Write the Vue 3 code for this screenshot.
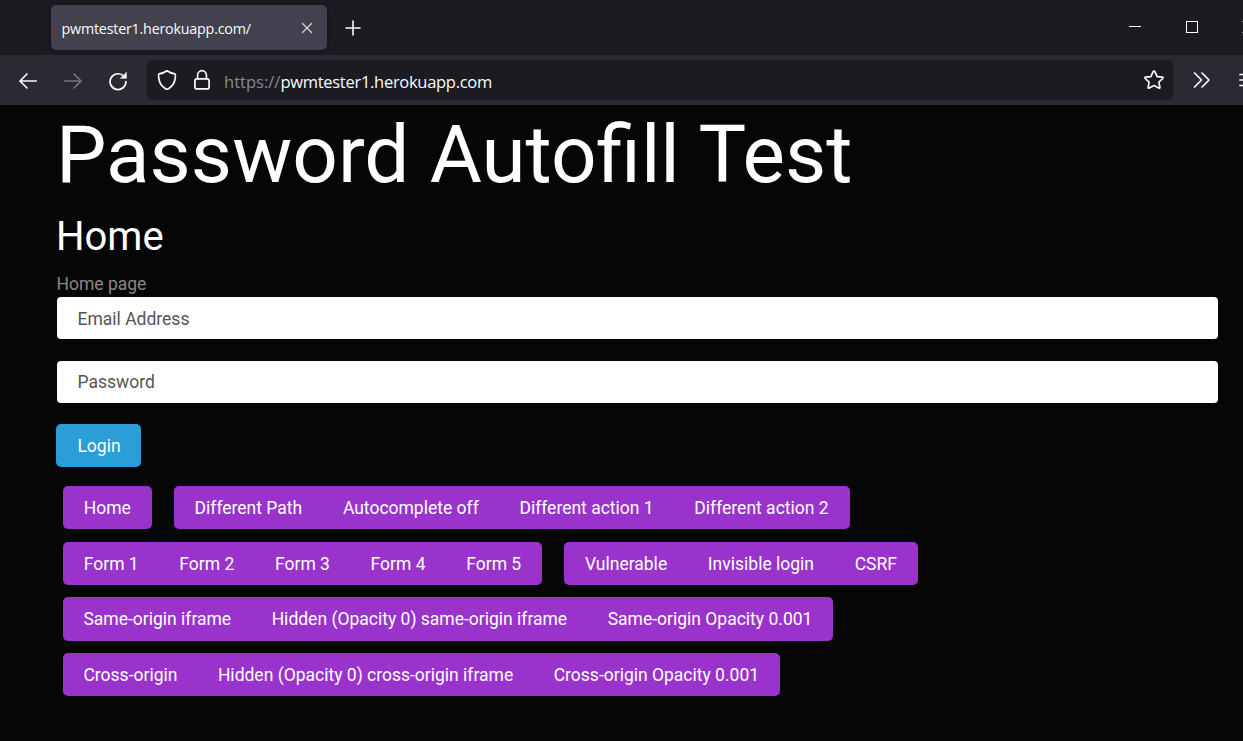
<script setup>
const rows = [
  [['Home'], ['Different Path', 'Autocomplete off', 'Different action 1', 'Different action 2']],
  [['Form 1', 'Form 2', 'Form 3', 'Form 4', 'Form 5'], ['Vulnerable', 'Invisible login', 'CSRF']],
  [['Same-origin iframe', 'Hidden (Opacity 0) same-origin iframe', 'Same-origin Opacity 0.001']],
  [['Cross-origin', 'Hidden (Opacity 0) cross-origin iframe', 'Cross-origin Opacity 0.001']],
]
</script>

<template>
  <div class="window">
    <header class="tabs">
      <div class="tab">
        <span class="tab-title">pwmtester1.herokuapp.com/</span>
        <svg class="close" width="12" height="12" viewBox="0 0 12 12"><path d="M1.5 1.5l9 9M10.5 1.5l-9 9" /></svg>
      </div>
      <svg class="plus" width="16" height="16" viewBox="0 0 16 16"><path d="M8 1v14M1 8h14" /></svg>
      <div class="controls">
        <svg width="12" height="12" viewBox="0 0 12 12" shape-rendering="crispEdges"><path d="M0 5.5h12" /></svg>
        <svg width="12" height="12" viewBox="0 0 12 12"><rect x=".5" y=".5" width="11" height="11" /></svg>
        <svg class="window-close" width="12" height="12" viewBox="0 0 12 12"><path d="M.5 .5l11 11M11.5 .5l-11 11" /></svg>
      </div>
    </header>
    <nav class="toolbar">
      <svg class="back" width="20" height="18" viewBox="0 0 20 18"><path d="M18.2 9H2M9 2L2 9l7 7" /></svg>
      <svg class="forward" width="20" height="18" viewBox="0 0 20 18"><path d="M1.8 9H18M11 2l7 7-7 7" /></svg>
      <svg class="reload" width="20" height="20" viewBox="0 0 20 20"><path d="M17.9 10.5A7.9 7.9 0 1 1 14.8 4.4" /><path class="solid" d="M18.4 1.6v5.700h-5.700z" /></svg>
      <div class="address">
        <svg class="shield" width="20" height="22" viewBox="0 0 20 22"><path d="M10 1.800C7.600 3.600 5 4.400 2.100 4.900 1.300 5.100 1.600 7.500 1.800 9.200c.5 4.800 3.300 8.600 7 10.700q1.200.6 2.400 0c3.700-2.100 6.500-5.900 7-10.700.2-1.700.5-4.100-.3-4.300C15 4.400 12.400 3.600 10 1.800z" /></svg>
        <svg class="lock" width="18" height="22" viewBox="0 0 18 22"><rect x="1.900" y="9.900" width="14.200" height="10" rx="2" /><path d="M4.600 9.800V6.100a4.400 4.400 0 0 1 8.800 0v3.700" /></svg>
        <span class="url"><span class="scheme">https://</span>pwmtester1.herokuapp.com</span>
        <svg class="star" width="22" height="22" viewBox="0 0 22 22"><path d="M11 2.200q.7 0 1 .7l2.100 4.700 5.200.6q1.300.3.500 1.300l-3.900 3.600 1 5.200q.1 1.200-1 .8L11 16.500l-4.900 2.600q-1.100.4-1-.8l1-5.200-3.900-3.600q-.8-1 .5-1.300l5.200-.6L10 2.900q.3-.7 1-.7z" /></svg>
      </div>
      <svg class="more" width="18" height="18" viewBox="0 0 18 18"><path d="M1.500 2l7 7-7 7M9 2l7 7-7 7" /></svg>
      <svg class="menu" width="18" height="14" viewBox="0 0 18 14"><path d="M1 1.500h16M1 7h16M1 12.500h16" /></svg>
    </nav>
    <main class="page">
      <h1>Password Autofill Test</h1>
      <h3>Home</h3>
      <p>Home page</p>
      <form @submit.prevent>
        <input class="email" type="text" placeholder="Email Address" />
        <input type="password" placeholder="Password" />
        <button class="login" type="submit">Login</button>
      </form>
      <div class="rows">
        <div v-for="(row, r) in rows" :key="r" class="row">
          <div v-for="(group, g) in row" :key="g" class="group">
            <a v-for="item in group" :key="item">{{ item }}</a>
          </div>
        </div>
      </div>
    </main>
  </div>
</template>

<style>
body { margin: 0; overflow: hidden; background: #060606; }
</style>

<style scoped>
* { box-sizing: border-box; }
.window { width: 1243px; height: 741px; overflow: hidden; display: flex; flex-direction: column; background: #060606; font-family: Roboto, sans-serif; color: #fff; }
svg { flex: none; display: block; fill: none; stroke: #fbfbfe; stroke-width: 1.700; stroke-linecap: round; stroke-linejoin: round; }
.tabs { flex: none; height: 55px; display: flex; align-items: center; background: #1c1b22; padding-left: 51px; }
.tab { width: 276px; height: 45px; border-radius: 5px; background: #42414d; display: flex; align-items: center; justify-content: space-between; padding: 0 14px 0 10.500px; box-shadow: 0 0 4px rgba(0, 0, 0, .4); }
.tab-title { font: 14.300px "Open Sans", sans-serif; letter-spacing: -.21px; white-space: nowrap; color: #fbfbfe; padding-top: 1px; }
.close { stroke-width: 1.200; stroke: #d5d5dc; }
.plus { margin-left: 18px; stroke-width: 1.600; }
.controls { margin-left: auto; display: flex; gap: 45px; margin-right: -11px; padding-bottom: 1px; }
.controls svg { stroke: #fff; stroke-width: 1; stroke-linecap: butt; stroke-linejoin: miter; }
.controls .window-close { margin-left: -1px; }
.toolbar { flex: none; height: 50px; background: #2b2a33; display: flex; align-items: center; padding-left: 18px; }
.back, .forward, .reload { margin-top: 1px; }
.forward { margin-left: 25px; stroke: #77767e; }
.reload { margin-left: 25px; }
.solid { fill: #fbfbfe; stroke-width: .6; }
.address { flex: none; width: 1026px; height: 40px; margin-left: 19px; border-radius: 5px; background: #1c1b22; display: flex; align-items: center; padding: 0 8px 0 10px; }
.lock { margin-left: 16px; }
.url { margin-left: 13px; font: 16.500px "Open Sans", sans-serif; letter-spacing: -.290px; color: #fbfbfe; white-space: nowrap; padding-top: 3px; }
.scheme { color: #8a898f; letter-spacing: .02px; }
.star { margin-left: auto; }
.more { margin-left: 20px; }
.menu { margin-left: 28px; }
.page { flex: 1; padding: 2px 25px 0 56px; font-size: 17.500px; line-height: 26.250px; }
h1, h3 { margin: 0 0 10px; font-weight: 400; line-height: 1.200; }
h1 { font-size: 80px; word-spacing: .5px; }
h3 { font-size: 40px; }
p { margin: 0; padding-left: .5px; color: #888; height: 26px; }
form { display: flex; flex-direction: column; align-items: flex-start; }
input { display: block; width: 1161px; height: 42px; margin: 0 0 21px 1px; padding: 0 20px 0 20.500px; border: 0; border-radius: 4px; background: #fff; font: 17.500px Roboto, sans-serif; color: #555; }
input::placeholder { color: #555; opacity: 1; }
.email { margin-bottom: 22px; padding-top: 2px; }
.login { width: 85px; height: 43px; border: 0; border-radius: 5px; background: #2a9fd6; color: #fff; font: 17.500px Roboto, sans-serif; padding: 0 0 0 1px; }
.rows { display: flex; flex-direction: column; gap: 12px; margin: 19px 0 0 7px; }
.row { display: flex; gap: 22px; height: 43px; }
.row:first-child { margin-bottom: 1px; }
.row:nth-child(3) { height: 44px; }
.group { display: flex; align-items: center; border-radius: 5px; background: #9933cc; padding: 0 .4px; }
.group + .group { padding: 0 .7px; }
.group a { padding: 1px 20.350px 0; line-height: 26px; white-space: nowrap; }
.row:nth-child(n+3) .group { padding: 0 .2px; }
.row:nth-child(n+3) a { padding: 1px 20.250px 0; }
.row:nth-child(3) a { padding-top: 0; }
</style>
